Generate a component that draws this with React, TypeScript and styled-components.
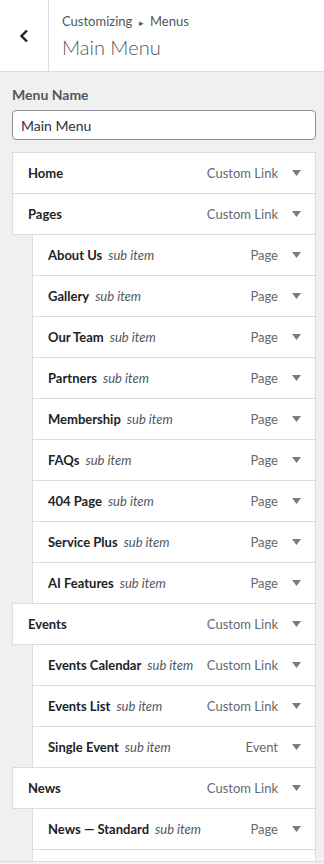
import React from 'react';
import styled, { createGlobalStyle } from 'styled-components';

type Item = {
  title: string;
  type: string;
  sub?: boolean;
};

const items: Item[] = [
  { title: 'Home', type: 'Custom Link' },
  { title: 'Pages', type: 'Custom Link' },
  { title: 'About Us', type: 'Page', sub: true },
  { title: 'Gallery', type: 'Page', sub: true },
  { title: 'Our Team', type: 'Page', sub: true },
  { title: 'Partners', type: 'Page', sub: true },
  { title: 'Membership', type: 'Page', sub: true },
  { title: 'FAQs', type: 'Page', sub: true },
  { title: '404 Page', type: 'Page', sub: true },
  { title: 'Service Plus', type: 'Page', sub: true },
  { title: 'AI Features', type: 'Page', sub: true },
  { title: 'Events', type: 'Custom Link' },
  { title: 'Events Calendar', type: 'Custom Link', sub: true },
  { title: 'Events List', type: 'Custom Link', sub: true },
  { title: 'Single Event', type: 'Event', sub: true },
  { title: 'News', type: 'Custom Link' },
  { title: 'News — Standard', type: 'Page', sub: true },
];

const font = `Lato, "Noto Sans", sans-serif`;

const GlobalStyle = createGlobalStyle`
  html, body {
    margin: 0;
    padding: 0;
    background: #f0f0f1;
  }
  body {
    font-family: ${font};
    color: #1d2327;
  }
`;

const App: React.FC = () => {
  return (
    <>
      <GlobalStyle />
      <Panel>
        <Header>
          <BackButton aria-label="Back">
            <svg width="10" height="14" viewBox="0 0 10 14">
              <path d="M8 1.5 L2.5 7 L8 12.5" fill="none" stroke="#1d2327" strokeWidth="2.4" />
            </svg>
          </BackButton>
          <HeaderText>
            <Crumb>
              Customizing <CrumbArrow>▸</CrumbArrow> Menus
            </Crumb>
            <Title>Main Menu</Title>
          </HeaderText>
        </Header>
        <Body>
          <Label>Menu Name</Label>
          <NameInput defaultValue="Main Menu" />
          <List>
            {items.map((item) => (
              <Row key={item.title} sub={!!item.sub}>
                <RowTitle>{item.title}</RowTitle>
                {item.sub && <SubNote>sub item</SubNote>}
                <RowType>{item.type}</RowType>
                <Toggle>
                  <svg width="9" height="6" viewBox="0 0 9 6">
                    <path d="M0 0 H9 L4.5 6 Z" fill="#787c82" />
                  </svg>
                </Toggle>
              </Row>
            ))}
            <Row sub />
          </List>
        </Body>
      </Panel>
    </>
  );
};

const Panel = styled.div`
  width: 324px;
  height: 861px;
  overflow: hidden;
  border-bottom: 1px solid #dcdcde;
  background: #f0f0f1;
`;

const Header = styled.div`
  display: flex;
  height: 71px;
  background: #fff;
  border-bottom: 1px solid #dcdcde;
`;

const BackButton = styled.div`
  width: 48px;
  flex: none;
  display: flex;
  align-items: center;
  justify-content: center;
  border-right: 1px solid #dcdcde;
`;

const HeaderText = styled.div`
  display: flex;
  flex-direction: column;
  padding: 11px 0 0 13px;
`;

const Crumb = styled.span`
  font-size: 13px;
  line-height: 20px;
  color: #50575e;
`;

const CrumbArrow = styled.span`
  font-size: 9px;
  padding: 0 3px;
`;

const Title = styled.span`
  font-size: 20px;
  font-weight: 300;
  line-height: 28px;
  color: #50575e;
`;

const Body = styled.div`
  padding: 13px 8px 0 12px;
`;

const Label = styled.div`
  font-size: 14px;
  font-weight: 700;
  line-height: 20px;
  color: #50575e;
  margin-bottom: 5px;
`;

const NameInput = styled.input`
  box-sizing: border-box;
  display: block;
  width: 304px;
  height: 30px;
  padding: 0 8px;
  border: 1px solid #8c8f94;
  border-radius: 4px;
  font-family: ${font};
  font-size: 14px;
  color: #2c3338;
  background: #fff;
  outline: none;
`;

const List = styled.div`
  margin-top: 12px;
`;

const Row = styled.div<{ sub: boolean }>`
  box-sizing: border-box;
  display: flex;
  align-items: center;
  height: 42px;
  margin-top: -1px;
  margin-left: ${(p) => (p.sub ? '20px' : '0')};
  padding-left: 15px;
  background: #fff;
  border: 1px solid #dcdcde;

  &:first-child {
    margin-top: 0;
  }
`;

const RowTitle = styled.span`
  font-size: 13px;
  font-weight: 700;
  color: #1d2327;
  white-space: nowrap;
`;

const SubNote = styled.span`
  font-size: 13px;
  font-style: italic;
  color: #50575e;
  margin-left: 6px;
  white-space: nowrap;
`;

const RowType = styled.span`
  margin-left: auto;
  font-size: 13px;
  color: #646970;
  white-space: nowrap;
`;

const Toggle = styled.span`
  width: 37px;
  flex: none;
  display: flex;
  align-items: center;
  justify-content: center;
`;

export default App;
